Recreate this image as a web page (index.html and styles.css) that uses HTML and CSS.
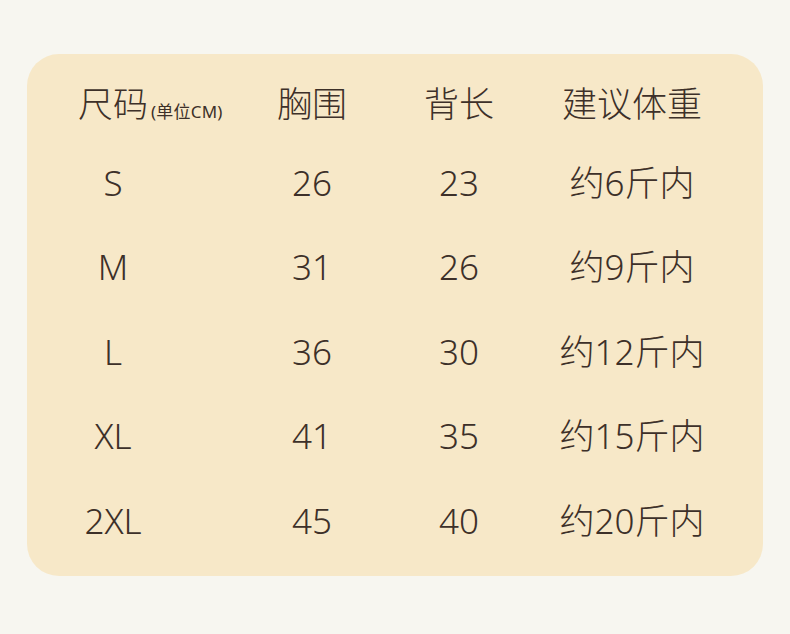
FILE: index.html
```html
<!DOCTYPE html>
<html lang="zh-CN">
<head>
<meta charset="utf-8">
<title>尺码表</title>
<link rel="stylesheet" href="styles.css">
</head>
<body>
<div class="card">
  <div class="table">
    <div class="cell head c1"><span class="hname">尺码<span class="unit">(单位CM)</span></span></div>
    <div class="cell head c2">胸围</div>
    <div class="cell head c3">背长</div>
    <div class="cell head c4">建议体重</div>

    <div class="cell c1">S</div>
    <div class="cell c2">26</div>
    <div class="cell c3">23</div>
    <div class="cell c4">约6斤内</div>

    <div class="cell c1">M</div>
    <div class="cell c2">31</div>
    <div class="cell c3">26</div>
    <div class="cell c4">约9斤内</div>

    <div class="cell c1">L</div>
    <div class="cell c2">36</div>
    <div class="cell c3">30</div>
    <div class="cell c4">约12斤内</div>

    <div class="cell c1">XL</div>
    <div class="cell c2">41</div>
    <div class="cell c3">35</div>
    <div class="cell c4">约15斤内</div>

    <div class="cell c1">2XL</div>
    <div class="cell c2">45</div>
    <div class="cell c3">40</div>
    <div class="cell c4">约20斤内</div>
  </div>
</div>
</body>
</html>
```
FILE: styles.css
```css
html, body {
  margin: 0;
  padding: 0;
}
body {
  background: #f7f6f0;
  width: 790px;
  height: 634px;
  padding: 54px 27px 0;
  box-sizing: border-box;
  font-family: "Noto Sans", "Noto Sans CJK SC", sans-serif;
  color: #3d3029;
}
.card {
  width: 736px;
  height: 522px;
  box-sizing: border-box;
  background: #f7e8c8;
  border-radius: 32px;
  padding-top: 12px;
}
.table {
  display: grid;
  grid-template-columns: 172px 226px 68px 270px;
  grid-template-rows: 74px repeat(5, 84.5px);
}
.cell {
  display: flex;
  align-items: center;
  justify-content: center;
  white-space: nowrap;
  font-size: 35px;
  font-weight: 300;
  line-height: 1;
}
.c4 {
  padding-left: 8px;
}
.hname {
  position: relative;
}
.unit {
  position: absolute;
  left: 100%;
  bottom: 1px;
  margin-left: 3px;
  font-size: 17px;
  font-weight: 400;
  letter-spacing: 0.2px;
}
```
